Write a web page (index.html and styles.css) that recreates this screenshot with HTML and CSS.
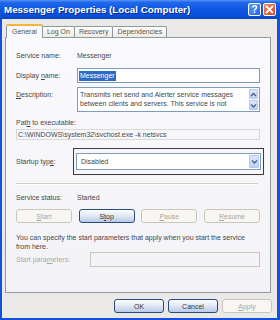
FILE: index.html
```html
<!DOCTYPE html>
<html lang="en">
  <head>
    <meta charset="UTF-8" />
    <title>Messenger Properties (Local Computer)</title>
    <link rel="stylesheet" href="styles.css">
  </head>
  <body>
    <div class="window">
      <!-- Barra de título -->
      <div class="titlebar">
        <span class="title">Messenger Properties (Local Computer)</span>
        <span class="tbtn help">?</span>
        <span class="tbtn close">
          <svg width="11" height="11" viewBox="0 0 11 11">
            <path d="M2.5 2.5 L8.5 8.5 M8.5 2.5 L2.5 8.5" stroke="#fff" stroke-width="1.8" stroke-linecap="round" />
          </svg>
        </span>
      </div>

      <div class="client">
        <!-- Pestañas -->
        <div class="tabs">
          <div class="tab active">General</div>
          <div class="tab">Log On</div>
          <div class="tab">Recovery</div>
          <div class="tab">Dependencies</div>
        </div>

        <div class="panel">
          <div class="row r-name">
            <span class="label">Service name:</span>
            <span>Messenger</span>
          </div>

          <div class="row r-display">
            <label class="label">Display <u>n</u>ame:</label>
            <div class="edit"><span class="sel">Messenger</span></div>
          </div>

          <div class="row r-desc">
            <label class="label"><u>D</u>escription:</label>
            <div class="edit memo">
              <div class="memo-text">
                Transmits net send and Alerter service messages<br />
                between clients and servers. This service is not
              </div>
              <div class="vscroll">
                <span class="sbtn">
                  <svg width="7" height="7" viewBox="0 0 7 7"><polyline points="1,5 3.5,2.5 6,5" fill="none" stroke="#4d6185" stroke-width="1.4" /></svg>
                </span>
                <span class="sbtn">
                  <svg width="7" height="7" viewBox="0 0 7 7"><polyline points="1,2.5 3.5,5 6,2.5" fill="none" stroke="#4d6185" stroke-width="1.4" /></svg>
                </span>
              </div>
            </div>
          </div>

          <div class="path-label">Pat<u>h</u> to executable:</div>
          <div class="path-box">C:\WINDOWS\system32\svchost.exe -k netsvcs</div>

          <div class="row r-startup">
            <label class="label">Startup typ<u>e</u>:</label>
            <div class="frame">
              <div class="combo">
                <span class="combo-text">Disabled</span>
                <span class="drop">
                  <svg width="7" height="7" viewBox="0 0 7 7"><polyline points="1,2.5 3.5,5 6,2.5" fill="none" stroke="#4d6185" stroke-width="1.4" /></svg>
                </span>
              </div>
            </div>
          </div>

          <div class="sep"></div>

          <div class="row r-status">
            <span class="label">Service status:</span>
            <span>Started</span>
          </div>

          <div class="svc-buttons">
            <button class="btn" disabled><u>S</u>tart</button>
            <button class="btn focus">S<u>t</u>op</button>
            <button class="btn" disabled><u>P</u>ause</button>
            <button class="btn" disabled><u>R</u>esume</button>
          </div>

          <p class="hint">
            You can specify the start parameters that apply when you start the service<br />
            from here.
          </p>

          <div class="row r-params">
            <label class="label disabled">Start para<u>m</u>eters:</label>
            <div class="edit off"></div>
          </div>
        </div>

        <!-- Botones del diálogo -->
        <div class="dlg-buttons">
          <button class="btn focus">OK</button>
          <button class="btn focus">Cancel</button>
          <button class="btn" disabled><u>A</u>pply</button>
        </div>
      </div>
    </div>
  </body>
</html>
```

FILE: styles.css
```css
/* Diálogo estilo Windows XP */
body {
  margin: 0;
  font-family: "Liberation Sans", Arial, sans-serif;
  font-size: 7px;
  color: #474747;
}
.window {
  width: 280px;
  height: 320px;
  display: flex;
  flex-direction: column;
  background: #ebe8e8;
}
.titlebar {
  height: 19px;
  flex: none;
  display: flex;
  align-items: center;
  padding: 0 4px 0 4px;
  gap: 2px;
  background: linear-gradient(#5596f6 0%, #2268ea 12%, #0d58e4 45%, #0a50dc 80%, #0844c6 100%);
}
.title {
  flex: 1;
  color: #fff;
  font-weight: bold;
  font-size: 9.8px;
  text-shadow: 1px 1px #0b2a8a;
  white-space: nowrap;
}
.tbtn {
  width: 13px;
  height: 13px;
  box-sizing: border-box;
  border: 1px solid #fff;
  border-radius: 2px;
  display: flex;
  align-items: center;
  justify-content: center;
  color: #fff;
  font-weight: bold;
  font-size: 10px;
}
.help {
  background: linear-gradient(135deg, #5b9bff, #2362e6);
}
.close {
  background: linear-gradient(135deg, #f08a62, #d8421c);
}
.client {
  flex: 1;
  box-sizing: border-box;
  border-left: 2px solid #1451dc;
  border-right: 3px solid #1451dc;
  border-bottom: 2px solid #1451dc;
  padding: 5px 6px 0 3px;
}
.tabs {
  height: 14px;
  margin-bottom: -1px;
  padding-left: 1px;
  display: flex;
  align-items: flex-end;
}
.tab {
  height: 10px;
  line-height: 10px;
  padding: 0 4px;
  margin-bottom: 1px;
  margin-left: -1px;
  border: 1px solid #919b9c;
  border-bottom: 0;
  border-radius: 2px 2px 0 0;
  background: linear-gradient(#ffffff, #ecebe5);
  color: #555;
}
.tab:first-child {
  margin-left: 0;
}
.tab.active {
  height: 12px;
  line-height: 12px;
  margin-bottom: 0;
  padding: 0 5px;
  border-top: 2px solid #f7b53a;
  background: #fafafc;
  position: relative;
  z-index: 1;
}
.panel {
  height: 256px;
  box-sizing: border-box;
  border: 1px solid #919b9c;
  background: linear-gradient(#fafafc, #f3f3f7);
  padding: 0 10px;
}
.row {
  display: grid;
  grid-template-columns: 61px 1fr;
  align-items: center;
}
.label {
  white-space: nowrap;
}
.r-name {
  margin-top: 12px;
  height: 10px;
}
.r-display {
  margin-top: 8px;
  height: 15px;
}
.edit {
  height: 15px;
  box-sizing: border-box;
  border: 1px solid #7f9db9;
  background: #fff;
  display: flex;
  align-items: center;
  padding-left: 1px;
}
.sel {
  background: #316ac5;
  color: #fff;
  padding: 0 1px;
  line-height: 10px;
}
.r-desc {
  margin-top: 4px;
  height: 25px;
  align-items: start;
}
.r-desc .label {
  padding-top: 4px;
}
.memo {
  height: 25px;
  align-items: stretch;
  padding: 1px 1px 1px 2px;
}
.memo-text {
  flex: 1;
  line-height: 9px;
  padding-top: 1px;
  white-space: nowrap;
}
.vscroll {
  width: 9px;
  display: flex;
  flex-direction: column;
  gap: 1px;
}
.sbtn,
.drop {
  flex: 1;
  box-sizing: border-box;
  border: 1px solid #b4c8f6;
  border-radius: 1px;
  background: linear-gradient(#dde8fe, #bdd0f7);
  display: flex;
  align-items: center;
  justify-content: center;
}
.path-label {
  margin-top: 6px;
  height: 9px;
  line-height: 9px;
}
.path-box {
  margin-top: 2px;
  height: 11px;
  box-sizing: border-box;
  border: 1px solid #d8d8d8;
  line-height: 9px;
  padding-left: 1px;
  white-space: nowrap;
}
.r-startup {
  margin-top: 8px;
  height: 27px;
}
.frame {
  margin: 0 -4px;
  height: 27px;
  box-sizing: border-box;
  border: 1px solid #3c3c3c;
  padding: 4px 2px;
}
.combo {
  height: 17px;
  box-sizing: border-box;
  border: 1px solid #7f9db9;
  background: #fff;
  display: flex;
  align-items: center;
  padding: 1px;
}
.combo-text {
  flex: 1;
  padding-left: 3px;
}
.drop {
  flex: none;
  width: 10px;
  height: 13px;
}
.sep {
  margin: 8px 2px 0 0;
  height: 1px;
  background: #d0d0bf;
  border-bottom: 1px solid #fff;
}
.r-status {
  margin-top: 7px;
  height: 10px;
}
.svc-buttons {
  margin-top: 7px;
  display: flex;
  justify-content: space-between;
}
.svc-buttons .btn {
  width: 56px;
}
.btn {
  height: 14px;
  padding: 0;
  font-family: "Liberation Sans", Arial, sans-serif;
  font-size: 7px;
  color: #333;
  border: 1px solid #003c74;
  border-radius: 3px;
  background: linear-gradient(#ffffff, #f0f0ea 70%, #dcd8cc);
}
.btn.focus {
  border-color: #2a4a80;
  background: linear-gradient(#fdfeff, #e2eaf6 45%, #b8cae8);
}
.btn:disabled {
  color: #aca899;
  border-color: #c9c7ba;
  background: #f7f6f2;
}
.hint {
  margin: 10px 0 0;
  line-height: 9px;
  white-space: nowrap;
}
.r-params {
  margin-top: 1px;
  height: 15px;
  grid-template-columns: 74px 1fr;
}
.disabled {
  color: #aca899;
}
.edit.off {
  background: transparent;
  border-color: #c9c7ba;
}
.dlg-buttons {
  margin: 6px -1px 0 0;
  display: flex;
  justify-content: flex-end;
  gap: 4px;
}
.dlg-buttons .btn {
  width: 50px;
}
```
